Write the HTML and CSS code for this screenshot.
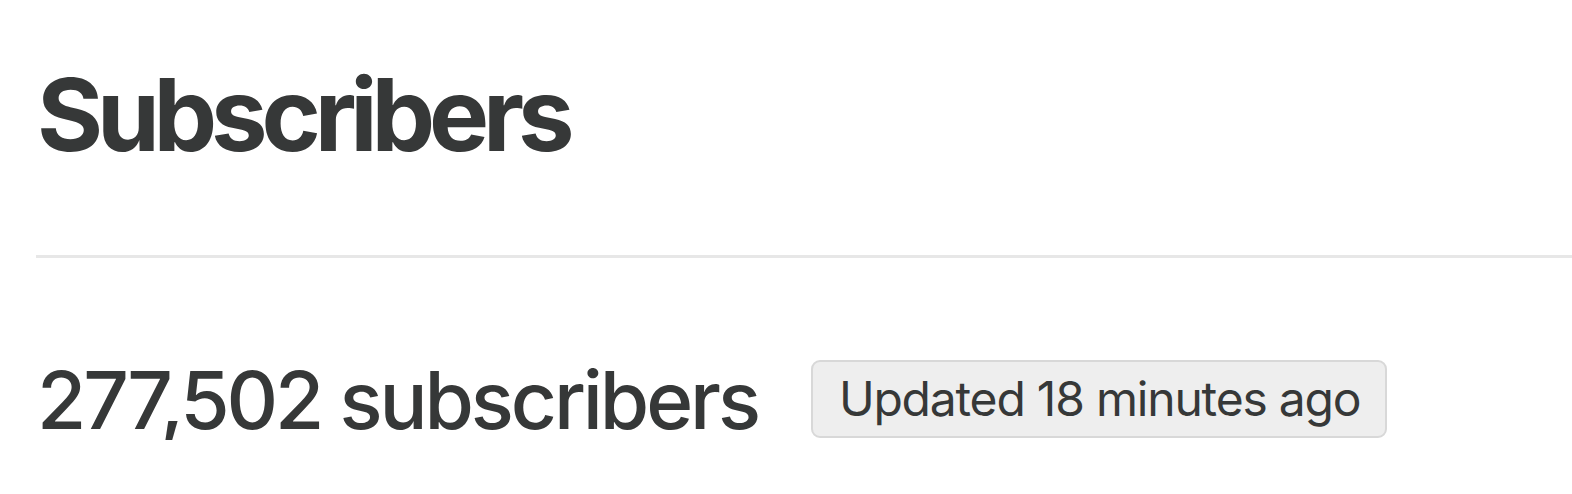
FILE: index.html
```html
<!DOCTYPE html>
<html lang="en">

<head>
    <meta charset="UTF-8">
    <meta name="viewport" content="width=device-width, initial-scale=1.0">
    <title>Subscribers</title>
    <link rel="stylesheet" href="styles.css">
</head>

<body>

    <header class="page-header">
        <h1>Subscribers</h1>
    </header>

    <div class="stats">
        <span class="stats-count">277,502 subscribers</span>
        <span class="badge">Updated 18 minutes ago</span>
    </div>

</body>

</html>
```

FILE: styles.css
```css
body {
    margin: 0;
    padding: 0 0 0 36px;
    font-family: Inter, "Liberation Sans", sans-serif;
    color: #363838;
    background-color: #fff;
}

.page-header {
    border-bottom: 3px solid #e7e7e7;
    padding: 64px 0 90px 1px;
}

h1 {
    margin: 0;
    font-size: 101px;
    line-height: 1;
    font-weight: 700;
    letter-spacing: -6.2px;
}

.stats {
    display: flex;
    align-items: center;
    gap: 53px;
    padding: 102px 0 0 1px;
}

.stats-count {
    font-size: 80px;
    line-height: 1;
    font-weight: 500;
    letter-spacing: -3.1px;
}

.badge {
    font-size: 48px;
    line-height: 1;
    padding: 13px 25px 13px 26px;
    background-color: #eeeeee;
    border: 2px solid #d8d8d8;
    border-radius: 9px;
    letter-spacing: -1.2px;
    position: relative;
    top: -1px;
}
```
